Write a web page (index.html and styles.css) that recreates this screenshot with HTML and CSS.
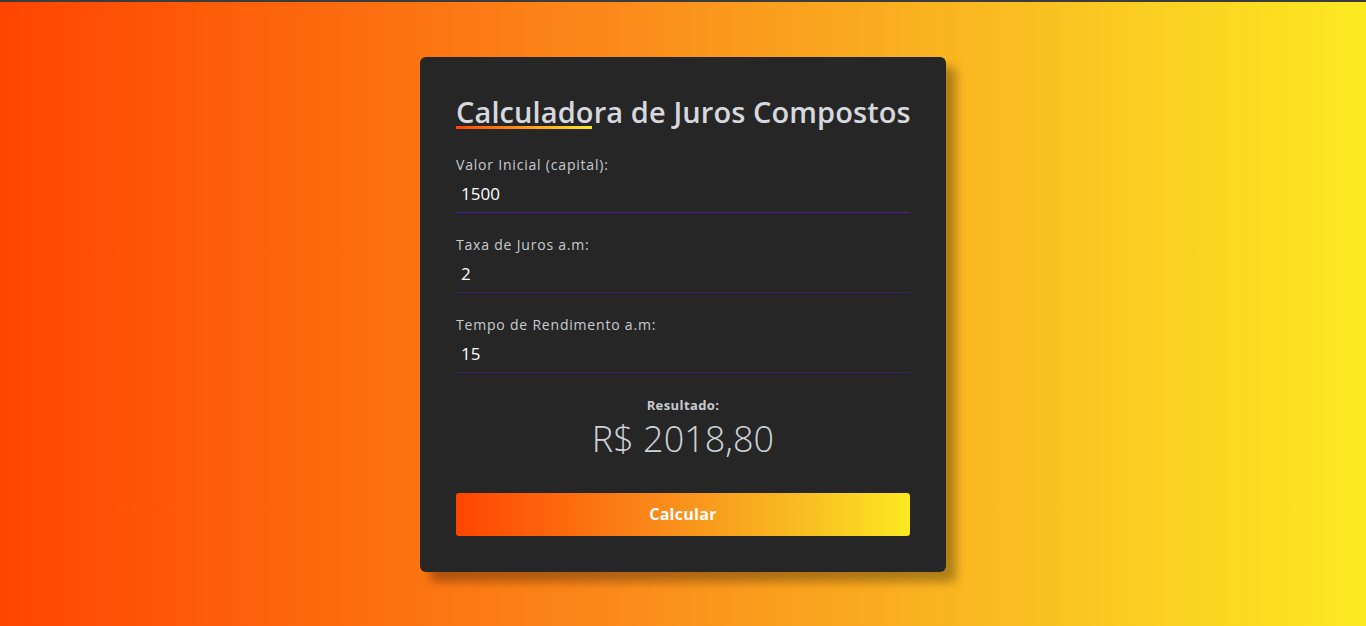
FILE: index.html
```html
<!DOCTYPE html>
<html lang="pt-BR">
<head>
<meta charset="utf-8">
<title>Calculadora de Juros Compostos</title>
<link rel="stylesheet" href="styles.css">
</head>
<body>
<main class="card">
  <h1 class="title">Calculadora de Juros Compostos</h1>
  <div class="field">
    <label class="label" for="capital">Valor Inicial (capital):</label>
    <input class="input input-focus" id="capital" type="text" value="1500">
  </div>
  <div class="field">
    <label class="label" for="taxa">Taxa de Juros a.m:</label>
    <input class="input" id="taxa" type="text" value="2">
  </div>
  <div class="field">
    <label class="label" for="tempo">Tempo de Rendimento a.m:</label>
    <input class="input" id="tempo" type="text" value="15">
  </div>
  <div class="result">
    <p class="result-label">Resultado:</p>
    <p class="result-value">R$ 2018,80</p>
  </div>
  <button class="btn" type="button">Calcular</button>
</main>
</body>
</html>
```
FILE: styles.css
```css
* { box-sizing: border-box; }
html, body { margin: 0; padding: 0; }
body {
  height: 626px;
  border-top: 2px solid #3c3c3c;
  background: linear-gradient(to right, #ff4500 0%, #fb8a1a 45%, #f9bf22 75%, #fde922 100%);
  display: flex;
  align-items: center;
  justify-content: center;
  font-family: "Open Sans", "Noto Sans", sans-serif;
}
.card {
  width: 526px;
  height: 515px;
  background: #262626;
  border-radius: 6px;
  padding: 36px;
  box-shadow: 10px 10px 10px rgba(0, 0, 0, 0.3);
  display: flex;
  flex-direction: column;
}
.card > * { flex-shrink: 0; }
.title {
  position: relative;
  margin: 0;
  padding-top: 1px;
  font-size: 29px;
  line-height: 35px;
  font-weight: 600;
  letter-spacing: 0.1px;
  color: #d6d8de;
  white-space: nowrap;
}
.title::after {
  content: "";
  position: absolute;
  left: 0;
  bottom: 0;
  width: 30%;
  height: 3px;
  background: linear-gradient(to right, #ff4500, #fde922);
}
.field {
  display: flex;
  flex-direction: column;
  margin-top: 26px;
}
.field + .field { margin-top: 22px; }
.label {
  font-size: 14px;
  line-height: 20px;
  letter-spacing: 0.8px;
  color: #c9cbd1;
}
.input {
  height: 38px;
  border: 0;
  border-bottom: 1px solid #3a2468;
  background: transparent;
  color: #ffffff;
  font-family: inherit;
  font-size: 17px;
  padding: 0 0 0 5px;
  outline: none;
}
.input-focus { border-bottom-color: #4c1b9e; }
.result {
  margin-top: 22px;
  text-align: center;
}
.result-label {
  margin: 0;
  font-size: 13px;
  line-height: 20px;
  font-weight: 700;
  letter-spacing: 0.4px;
  color: #c9cbd1;
}
.result-value {
  margin: 4px 0 0;
  font-size: 36px;
  line-height: 40px;
  font-weight: 300;
  color: #d0d2d8;
}
.btn {
  margin-top: 34px;
  height: 43px;
  border: 0;
  border-radius: 3px;
  background: linear-gradient(to right, #ff4500, #fa8a1a 45%, #f8bb22 75%, #fde922);
  color: #ffffff;
  font-family: inherit;
  font-size: 16px;
  font-weight: 700;
  letter-spacing: 0.3px;
  cursor: pointer;
}
```
